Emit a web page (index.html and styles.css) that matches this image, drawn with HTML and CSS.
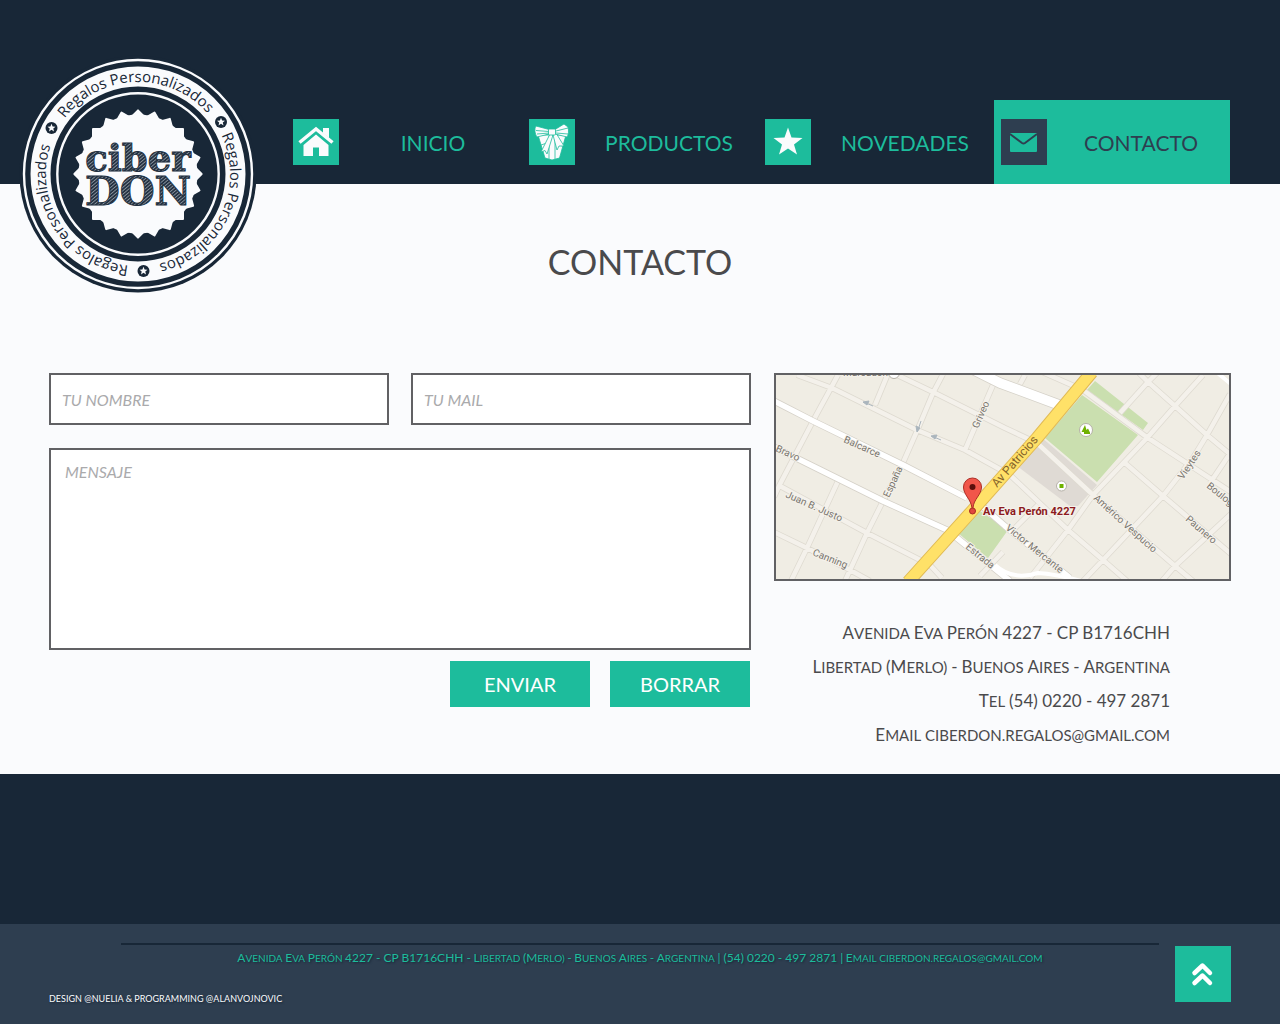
FILE: index.html
```html
<!DOCTYPE html>
<html lang="es">
<head>
<meta charset="utf-8">
<meta name="viewport" content="width=device-width, initial-scale=1">
<title>CiberDON - Contacto</title>
<link rel="stylesheet" href="styles.css">
</head>
<body>
<header class="header">
  <div class="header-inner">
    <a class="logo" href="#" aria-label="CiberDON, Regalos Personalizados">
      <svg viewBox="-120 -120 240 240">
        <defs>
          <path id="arc" d="M-73.5-55.4A92 92 0 0 1 76-52"/>
          <pattern id="hatch" width="2.600" height="2.600" patternUnits="userSpaceOnUse" patternTransform="rotate(-40)">
            <rect width="3" height="3" fill="#233141"/><rect width="3" height="0.900" fill="#8a939d"/>
          </pattern>
          <path id="star" d="M0-4.2 1.1-1.4 4-1.3 1.8.6 2.5 3.4 0 1.8-2.5 3.4-1.8.6-4-1.3-1.1-1.4Z"/>
          <rect id="teeth" x="-46" y="-46" width="92" height="92" rx="1"/>
        </defs>
        <circle r="118.5" fill="#182737"/>
        <circle r="114" fill="none" stroke="#fafbfd" stroke-width="2.4"/>
        <circle r="97.5" fill="none" stroke="#fafbfd" stroke-width="20"/>
        <circle r="80.7" fill="none" stroke="#fafbfd" stroke-width="2.4"/>
        <g fill="#fafbfd">
          <circle r="59.5"/>
          <use href="#teeth"/>
          <use href="#teeth" transform="rotate(15)"/>
          <use href="#teeth" transform="rotate(30)"/>
          <use href="#teeth" transform="rotate(45)"/>
          <use href="#teeth" transform="rotate(60)"/>
          <use href="#teeth" transform="rotate(75)"/>
        </g>
        <g class="ring-text">
          <text><textPath href="#arc">Regalos Personalizados</textPath></text>
          <text transform="rotate(118)"><textPath href="#arc">Regalos Personalizados</textPath></text>
          <text transform="rotate(239)"><textPath href="#arc">Regalos Personalizados</textPath></text>
        </g>
        <g fill="#182737"><circle cx="-86.5" cy="-46" r="6"/><circle cx="83" cy="-52" r="6"/><circle cx="5.5" cy="97" r="6"/></g>
        <g fill="#fafbfd"><use href="#star" x="-86.5" y="-46"/><use href="#star" x="83" y="-52"/><use href="#star" x="5.5" y="97"/></g>
        <g class="brand" fill="url(#hatch)" stroke="#233141" stroke-width="1">
          <text y="-3" font-size="37">ciber</text>
          <text y="31" font-size="40">DON</text>
        </g>
      </svg>
    </a>
    <nav class="nav">
      <a href="#">
        <svg class="icon" viewBox="0 0 46 46"><path fill="#fafbfd" d="M10.500 26 23 15.500 35.500 26V37H26V28.500H20V37H10.500Z"/><path d="M6.500 23.500 23 10 39.500 23.500" fill="none" stroke="#fafbfd" stroke-width="3.500"/><path d="M8 26 23 13.500 38 26" fill="none" stroke="#1dbc9c" stroke-width="1"/><path fill="#fafbfd" d="M30 9H36V19L30 14Z"/></svg>
        <span>INICIO</span>
      </a>
      <a href="#">
        <svg class="icon" viewBox="0 0 46 46"><g fill="#fafbfd" stroke="#1dbc9c" stroke-width=".8"><path d="M9 16H37L30.500 39 23 41 16 39Z"/><path d="M20 17V40.500M26 17V40.500M12 26 18 24M33 27 28 24"/><path d="M21 15 12 33 16 31.500 18 35 24 16ZM24 16 28 31 30 27 35 27 27 14Z"/><path d="M20 10.500 7 7C5 10 6 15 8 18L20 15ZM26 10.500 35 5 39 8C40 12 39.500 16 38 18L26 15Z"/><path d="M7 11.500 20 12.500M8 15 20 14M27 12 39 9M27 14 39 15"/><rect x="19.500" y="10" width="7" height="6" rx="1"/></g></svg>
        <span>PRODUCTOS</span>
      </a>
      <a href="#">
        <svg class="icon" viewBox="0 0 46 46"><path fill="#fafbfd" d="M23 8.500 26.500 18.500 37.500 19 29 25.500 32 35.500 23 29.500 14 35.500 17 25.500 8.500 19 19.500 18.500Z"/></svg>
        <span>NOVEDADES</span>
      </a>
      <a class="active" href="#" aria-current="page">
        <svg class="icon" viewBox="0 0 46 46"><rect x="9" y="14" width="27" height="19" rx="1" fill="#1dbc9c"/><path d="M9 15 21 24Q22.500 25 24 24L36 15" fill="none" stroke="#2e3e50" stroke-width="2"/></svg>
        <span>CONTACTO</span>
      </a>
    </nav>
  </div>
</header>

<main class="main">
  <h1>CONTACTO</h1>
  <div class="columns">
    <form class="form">
      <input type="text" aria-label="Tu nombre" placeholder="TU NOMBRE">
      <input type="email" aria-label="Tu mail" placeholder="TU MAIL">
      <textarea aria-label="Mensaje" placeholder="MENSAJE"></textarea>
      <div class="actions">
        <button type="submit">ENVIAR</button>
        <button type="reset">BORRAR</button>
      </div>
    </form>
    <section class="place">
      <svg class="map" viewBox="776 375 453 204" preserveAspectRatio="xMidYMid slice" role="img" aria-label="Mapa de Av Eva Perón 4227">
        <defs>
          <path id="minor" d="M838 375 813 421 779 486 774 497M887 376 875 405M943 374 933 393 917 431 902 465 883 501 867 533 845 581M838 481 807 548 791 581M993 385 965 450M797 375 832 388 917 430 965 450 1003 471M893 373 935 393 1005 428 1037 443 1093 495 1175 566 1193 581M780 486 867 533 930 565 942 578M774 532 807 548 850 570 870 581M1040 371 1083 390 1148 438 1231 492M1139 373 1147 381 1175 406 1207 435 1231 455M1125 463 1163 496 1231 554M1010 475 1068 530 1103 560 1127 581M1157 373 1147 383 1120 413M1203 375 1175 406 1147 438 1093 495 1068 530 1030 578M1230 394 1207 435 1193 458 1163 496 1103 560 1083 581M1231 452 1210 483M1231 514 1175 566 1162 581M1025 375 1020 384M1038 505 1015 528M1003 552 980 576"/>
          <path id="white" d="M774 401 813 421 903 465 967 498M982 506 1005 526 1070 578M774 447 883 501 947 530 957 538 1010 581"/>
          <path id="avenue" d="M908 582 972 511 1037 438 1092 372"/>
        </defs>
        <rect x="774" y="373" width="458" height="208" fill="#f0ede4"/>
        <path fill="#dfdad4" d="M1041 437 1097 485 1078 506 1070 506 1017 466Z"/>
        <path fill="#cadfaf" d="M1082 395 1138 435 1097 482 1045 438ZM1095 381 1148 423 1143 430 1087 390ZM980 511 1008 530 988 558 958 533Z"/>
        <g fill="none" stroke-linejoin="round">
          <use href="#minor" stroke="#dedad0" stroke-width="6"/><use href="#minor" stroke="#f4f1eb" stroke-width="4.500"/>
          <use href="#white" stroke="#d5d1c8" stroke-width="7"/><use href="#white" stroke="#fff" stroke-width="5.500"/>
          <path d="M970 368 1000 383 1062 406" stroke="#d5d1c8" stroke-width="11"/><path d="M970 368 1000 383 1062 406" stroke="#fff" stroke-width="9.500"/>
          <path d="M1214 370 1232 385M995 565Q1012 581 1038 573 1056 574 1085 582" stroke="#fff" stroke-width="4"/>
          <use href="#avenue" stroke="#e0ba55" stroke-width="13"/><use href="#avenue" stroke="#ffe168" stroke-width="11"/>
        </g>
        <g stroke="#aab5bd" stroke-width="1" fill="#aab5bd"><path d="M873 406 866 403M941 440 934 437M921 421 918 430"/><path d="M863 402 869 401 867 405ZM931 436 937 435 935 439ZM917 432 916 426 920 428Z"/></g>
        <g class="streets">
          <text x="843" y="376">Marcadona</text>
          <text transform="translate(843 442) rotate(24)">Balcarce</text>
          <text transform="translate(775 451) rotate(24)">Bravo</text>
          <text transform="translate(785 497) rotate(24)">Juan B. Justo</text>
          <text transform="translate(812 555) rotate(22)">Canning</text>
          <text transform="translate(889 498) rotate(-65)">España</text>
          <text transform="translate(978 429) rotate(-66)">Griveo</text>
          <text transform="translate(965 548) rotate(39)">Estrada</text>
          <text transform="translate(1005 529) rotate(39)">Victor Mercante</text>
          <text transform="translate(1093 499) rotate(42)">Américo Vespucio</text>
          <text transform="translate(1183 480) rotate(-56)">Vieytes</text>
          <text transform="translate(1206 487) rotate(39)">Boulog</text>
          <text transform="translate(1185 520) rotate(41)">Paunero</text>
        </g>
        <text class="avenue" transform="translate(997 488) rotate(-49)">Av Patricios</text>
        <g stroke="#b5b1a8" fill="#fff"><circle cx="1086" cy="430" r="6.500"/><circle cx="1061.500" cy="486" r="5"/><circle cx="894" cy="373" r="5.500"/></g>
        <path fill="#6fb100" d="M1085 425 1081.500 432H1084V434H1090V432.500L1088 428.500 1086.500 430ZM1059.500 484H1063.500V488H1059.500Z"/>
        <circle cx="972.500" cy="511" r="3" fill="#e0483e" stroke="#a92b25"/>
        <path d="M972 508C971 499 963.500 495 963.500 487A9 9 0 0 1 981.500 487C981.500 495 973.500 499 973 508Z" fill="#f1564a" stroke="#ac2d25"/>
        <circle cx="972.500" cy="487" r="3" fill="#5b0f0c"/>
        <text class="address-label" x="983" y="515">Av Eva Perón 4227</text>
      </svg>
      <address class="address caps">
        <p><span>Avenida</span> <span>Eva</span> <span>Perón</span> <b>4227 - CP B1716CHH</b></p>
        <p><span>Libertad</span> <span>(Merlo)</span> <b>-</b> <span>Buenos</span> <span>Aires</span> <b>-</b> <span>Argentina</span></p>
        <p><span>Tel</span> <b>(54) 0220 - 497 2871</b></p>
        <p><span>Email</span> ciberdon.regalos@gmail.com</p>
      </address>
    </section>
  </div>
</main>

<footer>
  <div class="footer-band"></div>
  <div class="footer-bar">
    <p class="footer-contact caps"><span>Avenida</span> <span>Eva</span> <span>Perón</span> <b>4227 - CP B1716CHH -</b> <span>Libertad</span> <span>(Merlo)</span> <b>-</b> <span>Buenos</span> <span>Aires</span> <b>-</b> <span>Argentina</span> <b>| (54) 0220 - 497 2871 |</b> <span>Email</span> ciberdon.regalos@gmail.com</p>
    <p class="credits">DESIGN @NUELIA &amp; PROGRAMMING @ALANVOJNOVIC</p>
    <a class="to-top" href="#" aria-label="Volver arriba">
      <svg viewBox="0 0 56 56"><path d="M19.500 27 27.500 19.500 35 27M19.500 37 27.500 29.500 35 37" fill="none" stroke="#fff" stroke-width="4.500" stroke-linecap="round" stroke-linejoin="round"/></svg>
    </a>
  </div>
</footer>
</body>
</html>
```
FILE: styles.css
```css
* { box-sizing: border-box; }

body {
  margin: 0;
  background: #fafbfd;
  color: #4a4a4c;
  font-family: Lato, "Liberation Sans", sans-serif;
}

p, h1 { margin: 0; font-weight: 400; }
a { color: inherit; text-decoration: none; }
svg { display: block; }

.header { background: #182737; }

.header-inner {
  position: relative;
  display: grid;
  grid-template-columns: repeat(5, 1fr);
  padding: 100px 50px 0;
}

.logo {
  position: absolute;
  left: 18px;
  top: 54px;
  width: 240px;
}

.ring-text {
  fill: #182737;
  font: 15px "Open Sans", sans-serif;
}

.brand {
  font-family: "DejaVu Serif", serif;
  font-weight: 700;
  text-anchor: middle;
}

.nav {
  grid-column: 2 / -1;
  display: grid;
  grid-template-columns: repeat(4, 1fr);
}

.nav a {
  display: flex;
  align-items: center;
  height: 84px;
  padding-left: 7px;
  color: #1dbc9c;
  font-size: 21px;
}

.nav span { flex: 1; padding-left: 5px; text-align: center; }
.icon { width: 46px; height: 46px; background: #1dbc9c; }
.nav .active { background: #1dbc9c; color: #2e3e50; }
.active .icon { background: #2e3e50; }

.main { padding: 56px 49px 22px; }

h1 {
  margin-bottom: 89px;
  font-size: 34px;
  line-height: 44px;
  text-align: center;
}

.columns {
  display: grid;
  grid-template-columns: 702fr 457fr;
  gap: 23px;
}

.form {
  display: grid;
  grid-template-columns: 1fr 1fr;
  gap: 23px 22px;
  align-content: start;
}

.form input, .form textarea {
  width: 100%;
  border: 2px solid #616164;
  border-radius: 0;
  background: #fff;
  padding: 0 11px;
  font: italic 16px Lato, sans-serif;
}

.form input { height: 52px; }

.form textarea {
  display: block;
  grid-column: 1 / -1;
  height: 202px;
  padding: 12px 14px;
  resize: none;
}

::placeholder { color: #aaaaac; opacity: 1; }

.actions {
  grid-column: 1 / -1;
  display: flex;
  justify-content: flex-end;
  gap: 20px;
  margin-top: -12px;
  padding-right: 1px;
}

.actions button {
  width: 140px;
  height: 46px;
  border: 0;
  background: #1dbc9c;
  color: #fff;
  font: 20px Lato, sans-serif;
}

.map {
  width: 100%;
  height: 208px;
  border: 2px solid #616164;
}

.streets {
  fill: #7a766f;
  stroke: #f5f2eb;
  stroke-width: 2px;
  paint-order: stroke;
  font: 10px Roboto, sans-serif;
}

.map .avenue { fill: #85632a; font: 12px Roboto, sans-serif; }

.address-label {
  fill: #8c1a20;
  stroke: #f5f2eb;
  stroke-width: 2px;
  paint-order: stroke;
  font: 700 11px Roboto, sans-serif;
}

.caps { text-transform: uppercase; }
.caps span { display: inline-block; line-height: 1; }
.caps b { font-weight: 400; line-height: 1; }

.address {
  padding: 35px 61px 0 0;
  font-size: 15px;
  font-style: normal;
  line-height: 34px;
  text-align: right;
}

.address b, .address span::first-letter { font-size: 17px; }

.footer-band { height: 150px; background: #182737; }

.footer-bar {
  display: grid;
  grid-template-columns: 56px 1fr 56px;
  grid-template-rows: 44px 34px;
  column-gap: 16px;
  padding: 19px 49px 3px;
  min-height: 100px;
  background: #2e3e50;
}

.footer-contact {
  grid-column: 2;
  border-top: 2px solid #182737;
  color: #1dbc9c;
  font-size: 10px;
  line-height: 26px;
  text-align: center;
  text-shadow: 1px 1px 2px #182737;
}

.footer-contact b, .footer-contact span::first-letter { font-size: 12px; }

.credits {
  grid-column: 1 / 3;
  grid-row: 2;
  color: #fafbfd;
  font-size: 9px;
  line-height: 24px;
  text-shadow: 1px 1px 2px #182737;
}

.to-top {
  grid-column: 3;
  grid-row: 1 / 3;
  height: 56px;
  margin-top: 3px;
  background: #1dbc9c;
}
```
